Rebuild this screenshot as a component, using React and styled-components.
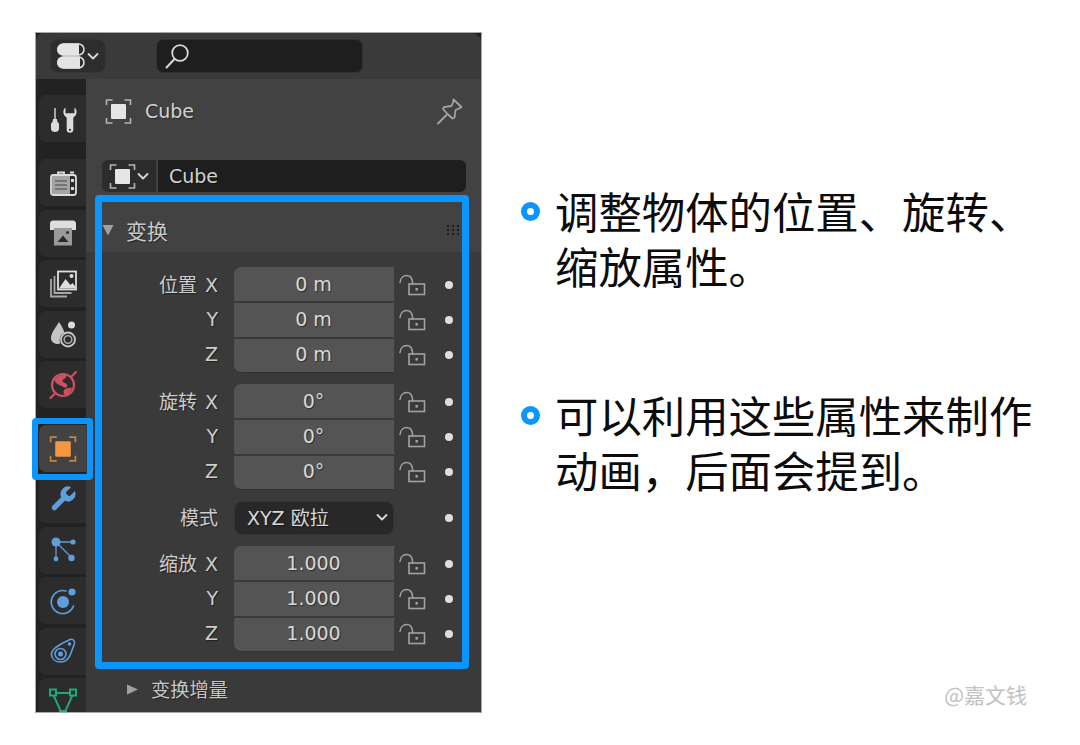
import React from "react";
import styled, { createGlobalStyle } from "styled-components";

const UI_FONT = `"DejaVu Sans", "Noto Sans CJK SC", sans-serif`;

const GlobalStyle = createGlobalStyle`
  html, body {
    margin: 0;
    background: #fff;
  }
`;

const Page = styled.div`
  display: flex;
  gap: 40px;
  width: 1080px;
  height: 745px;
  padding: 33px 0 0 36px;
  box-sizing: border-box;
  overflow: hidden;
`;

const Frame = styled.div`
  position: relative;
  width: 445px;
  height: 679px;
  flex: none;
`;

const Editor = styled.div`
  display: flex;
  flex-direction: column;
  height: 100%;
  overflow: hidden;
  background: #202020;
  box-shadow: 0 0 0 1px #a8a8a8;
  font-family: ${UI_FONT};
  color: #d2d2d2;
  text-shadow: 1px 1px 1px rgba(0, 0, 0, 0.45);
`;

const Header = styled.div`
  display: flex;
  align-items: center;
  gap: 50px;
  flex: none;
  height: 46px;
  padding-left: 14px;
  background: #3a3a3a;
  border-radius: 7px 9px 0 0;
`;

const ModeSwitch = styled.div`
  display: flex;
  align-items: center;
  justify-content: center;
  gap: 1px;
  width: 56px;
  height: 34px;
  box-sizing: border-box;
  background: #2d2d2d;
  border: 1px solid #353535;
  border-radius: 8px;
`;

const SearchBox = styled.div`
  display: flex;
  align-items: center;
  width: 207px;
  height: 34px;
  padding-left: 5px;
  box-sizing: border-box;
  background: #1e1e1e;
  border: 1px solid #333;
  border-radius: 7px;
`;

const Body = styled.div`
  display: flex;
  flex: 1;
  min-height: 0;
`;

const Sidebar = styled.div`
  display: flex;
  flex-direction: column;
  flex: none;
  width: 50px;
  padding: 16px 0 0 3px;
  box-sizing: border-box;
  background: #222;
`;

const TabGroup = styled.div`
  display: flex;
  flex-direction: column;
  gap: 3.6px;
  margin-bottom: 17px;
`;

const Tab = styled.div`
  display: flex;
  align-items: center;
  justify-content: center;
  flex: none;
  height: 47px;
  border-radius: 7px 0 0 7px;
  background: ${(p) => (p.$active ? "#424242" : "#2c2c2c")};
`;

const Main = styled.div`
  display: flex;
  flex-direction: column;
  flex: 1;
  min-width: 0;
  background: #424242;
`;

const TitleRow = styled.div`
  display: flex;
  align-items: center;
  gap: 13px;
  height: 64px;
  padding: 0 17px 0 19px;
  font-size: 19px;
`;

const TitleText = styled.span`
  flex: 1;
`;

const NameRow = styled.div`
  display: flex;
  gap: 2px;
  height: 32px;
  margin: 17px 15px 0 16px;
`;

const NameType = styled.div`
  display: flex;
  align-items: center;
  justify-content: center;
  flex: none;
  width: 54px;
  background: #2c2c2c;
  border-radius: 6px 0 0 6px;
`;

const NameInput = styled.div`
  display: flex;
  align-items: center;
  flex: 1;
  padding-left: 11px;
  font-size: 19px;
  background: #1e1e1e;
  border-radius: 0 6px 6px 0;
`;

const PanelHead = styled.div`
  display: flex;
  align-items: center;
  flex: none;
  height: 55px;
  margin-top: 5px;
  padding: 10px 20px 0 16px;
  box-sizing: border-box;
  font-size: 21px;
  color: #c8c8c8;
`;

const PanelTitle = styled.span`
  flex: 1;
  margin-left: 12px;
`;

const PanelBody = styled.div`
  display: flex;
  flex-direction: column;
  flex: 1;
  gap: 11px;
  padding-top: 15px;
  background: #3a3a3a;
`;

const FieldGroup = styled.div`
  display: flex;
  flex-direction: column;
`;

const Row = styled.div`
  display: grid;
  grid-template-columns: 132px 176px 44px 15px;
  align-items: center;
  height: ${(p) => (p.$mode ? "34px" : "35.33px")};
`;

const RowLabel = styled.div`
  padding-bottom: 2px;
  text-align: right;
  font-size: 19px;
  word-spacing: 2px;
  white-space: nowrap;
  color: #cdcdcd;
`;

const Value = styled.div`
  display: flex;
  align-items: center;
  justify-content: center;
  height: 100%;
  margin-left: 16px;
  padding: 0 1px 2px 0;
  box-sizing: border-box;
  font-size: 19px;
  color: #d8d8d8;
  background: #545454;
  border-top: 1px solid ${(p) => (p.$first ? "#545454" : "#3a3a3a")};
  border-bottom: 1px solid ${(p) => (p.$last ? "#333" : "#3a3a3a")};
  border-radius: ${(p) =>
    p.$first ? "7px 0 0 0" : p.$last ? "0 0 0 7px" : "0"};
`;

const ModeSelect = styled.div`
  display: flex;
  align-items: center;
  justify-content: space-between;
  height: 100%;
  margin-left: 16px;
  padding: 0 4px 2px 12px;
  box-sizing: border-box;
  font-size: 19px;
  color: #d8d8d8;
  background: #282828;
  border: 1px solid #333;
  border-radius: 8px;
`;

const LockCell = styled.div`
  display: flex;
  align-items: center;
  margin-left: 5px;
`;

const Dot = styled.span`
  width: 8px;
  height: 8px;
  margin-left: 7px;
  border-radius: 50%;
  background: #dedede;
`;

const SubPanel = styled.div`
  display: flex;
  align-items: center;
  gap: 13px;
  flex: none;
  height: 43px;
  padding: 0 0 3px 41px;
  box-sizing: border-box;
  font-size: 19.3px;
  color: #c6c6c6;
  background: #3a3a3a;
`;

const Highlight = styled.div`
  position: absolute;
  left: ${(p) => p.$left}px;
  top: ${(p) => p.$top}px;
  width: ${(p) => p.$w}px;
  height: ${(p) => p.$h}px;
  box-sizing: border-box;
  border: ${(p) => p.$line}px solid #0a95ff;
  border-radius: 4px;
  pointer-events: none;
`;

const Notes = styled.div`
  display: flex;
  flex-direction: column;
  width: 520px;
  height: 679px;
  padding-top: 150px;
  box-sizing: border-box;
  font-family: "Noto Sans CJK SC", sans-serif;
  color: #0c0c0c;
`;

const Note = styled.div`
  display: flex;
  gap: 15px;
  margin-bottom: 95px;
  font-size: 43.4px;
  line-height: 54.5px;
`;

const NoteDot = styled.span`
  flex: none;
  width: 19px;
  height: 19px;
  margin-top: 19px;
  box-sizing: border-box;
  border: 6.5px solid #0a95ff;
  border-radius: 50%;
  background: #fff;
`;

const Watermark = styled.div`
  align-self: flex-end;
  margin: auto 14px 1px 0;
  font-size: 21px;
  line-height: 34px;
  color: #c2c2c2;
`;

// icons
const Svg = ({ size = 30, children }) => (
  <svg width={size} height={size} viewBox="0 0 30 30" fill="none">
    {children}
  </svg>
);

const Chevron = ({ color = "#d8d8d8" }) => (
  <svg width="14" height="14" viewBox="0 0 14 14" fill="none">
    <path d="M2.5 5 7 9.5 11.5 5" stroke={color} strokeWidth="1.8" strokeLinecap="round" strokeLinejoin="round" />
  </svg>
);

const SwitchIcon = () => (
  <svg width="28" height="26" viewBox="0 0 28 26" fill="none">
    <rect x="1" y="1" width="26" height="11" rx="5.5" stroke="#e4e4e4" strokeWidth="1.5" />
    <path d="M6 .5h16v12H6A6 6 0 0 1 6 .5z" fill="#e4e4e4" />
    <rect x="1" y="14" width="26" height="11" rx="5.5" stroke="#e4e4e4" strokeWidth="1.5" />
    <path d="M6 13.5h17v12H6a6 6 0 0 1 0-12z" fill="#e4e4e4" />
  </svg>
);

const SearchIcon = () => (
  <svg width="30" height="30" viewBox="0 0 30 30" fill="none">
    <circle cx="18" cy="12" r="7.8" stroke="#d8d8d8" strokeWidth="1.8" />
    <path d="M12.5 18 4.500 26.500" stroke="#d8d8d8" strokeWidth="2" strokeLinecap="round" />
  </svg>
);

const ObjectIcon = ({ size = 27, color = "#e6e6e6", frame = "#b4b4b4" }) => (
  <svg width={size} height={size} viewBox="0 0 27 27" fill="none">
    <path
      d="M1.500 7V2h6M19.500 2h6v5M25.500 20v5h-6M7.500 25h-6v-5"
      stroke={frame}
      strokeWidth="1.6"
    />
    <rect x="6" y="6" width="15" height="15" rx="1" fill={color} />
  </svg>
);

const PinIcon = () => (
  <svg width="28" height="28" viewBox="0 0 28 28" fill="none">
    <path
      d="M2 26.500 10.500 18M17.500 2.500l8 7.500-2.500 1.500-3.500 1.500-1 7.500-2 1-5-4.500-4.500-5 .8-1.800 7.700-1.200 1.500-3.500z"
      stroke="#a4a4a4"
      strokeWidth="1.8"
      strokeLinejoin="round"
      strokeLinecap="round"
    />
  </svg>
);

const LockIcon = () => (
  <svg width="27" height="22" viewBox="0 0 27 22" fill="none" style={{ flex: "none" }}>
    <path d="M1 8.500C1.500 4 4.500 1.500 7.500 1.500s5.500 2.200 6 6.500v2" stroke="#a2a2a2" strokeWidth="1.5" strokeLinecap="round" />
    <rect x="10" y="10" width="15.5" height="10.500" stroke="#a2a2a2" strokeWidth="1.6" />
    <rect x="16.500" y="14" width="2.400" height="2.600" fill="#a2a2a2" />
  </svg>
);

const TriangleDown = () => (
  <svg width="12" height="12" viewBox="0 0 12 12">
    <path d="M.5 1h11L6 11.500z" fill="#a0a0a0" />
  </svg>
);

const TriangleRight = () => (
  <svg width="11" height="11" viewBox="0 0 11 11">
    <path d="M0 .5 11 5.500 0 10.500z" fill="#a0a0a0" />
  </svg>
);

const Grip = () => (
  <svg width="15" height="10" viewBox="0 0 15 10" fill="#1c1c1c">
    {[1, 5, 9].map((y) =>
      [1, 6, 11].map((x) => <rect key={`${x}-${y}`} x={x} y={y - 1} width="2" height="2" />)
    )}
  </svg>
);

const ToolIcon = () => (
  <Svg>
    <path d="M7 4v11" stroke="#dcdcdc" strokeWidth="1.4" />
    <path d="M5 15h4l.5 3 1.500 1.500V25c0 2-2 3-4 3s-4-1-4-3v-5.500L4.500 18z" fill="#dcdcdc" />
    <path
      d="M17.500 3.500c-3 2-3 7.500 1.200 10V26c0 1.500 1.400 2.800 3.300 2.800s3.300-1.300 3.300-2.800V13.500c4.200-2.500 4.200-8 1.200-10v5.800h-9z"
      fill="#dcdcdc"
    />
    <circle cx="22" cy="25.800" r="1.100" fill="#2c2c2c" />
  </Svg>
);

const RenderIcon = () => (
  <Svg>
    <path d="M10 7V4.500h6V7M22 4.500h4" stroke="#dcdcdc" strokeWidth="1.800" />
    <rect x="3" y="7" width="25" height="20" rx="2.500" stroke="#dcdcdc" strokeWidth="1.800" />
    <rect x="4" y="8" width="18" height="18" fill="#a4a4a4" />
    <path d="M7 13h12M7 17h12M7 21h12" stroke="#666" strokeWidth="1.500" />
    <rect x="23" y="11" width="3" height="3" fill="#dcdcdc" />
    <rect x="23" y="19" width="3" height="3" fill="#dcdcdc" />
  </Svg>
);

const OutputIcon = () => (
  <Svg>
    <path d="M2 5.500C2 3.500 3.500 2.500 5 2.500h20c1.500 0 3 1 3 3V12H2z" fill="#dedede" />
    <rect x="6" y="10" width="18" height="17.500" fill="#9a9a9a" />
    <path d="M9.500 24 15 17.500l5.500 6.500z" fill="#2b2b2b" />
    <circle cx="19.500" cy="14.500" r="1.500" fill="#2b2b2b" />
  </Svg>
);

const ViewLayerIcon = () => (
  <Svg>
    <path d="M3 10v17.500h16M6.500 7v17h17" stroke="#a8a8a8" strokeWidth="1.800" />
    <rect x="10" y="2.500" width="18" height="18" fill="#2c2c2c" stroke="#dedede" strokeWidth="1.800" />
    <path d="M11 19.500 17.500 10l5 6 2-2 2.500 3v2.500z" fill="#dedede" />
    <circle cx="23.500" cy="7" r="2" fill="#dedede" />
  </Svg>
);

const SceneIcon = () => (
  <Svg>
    <path d="M11 3C8 8 3 14 3 19c0 3.500 3 6 6.500 6 1 0 2-.3 3-.7-2-4.300 0-9 4-10.800C15 9 13 6 11 3z" fill="#c4c4c4" />
    <circle cx="23.500" cy="6" r="3.500" fill="#dcdcdc" />
    <circle cx="20" cy="20.500" r="7" stroke="#c8c8c8" strokeWidth="1.800" />
    <circle cx="20" cy="20.500" r="3.800" stroke="#a8a8a8" strokeWidth="1.600" />
  </Svg>
);

const WorldIcon = () => (
  <Svg>
    <circle cx="15" cy="15" r="11" stroke="#c9535f" strokeWidth="2.200" />
    <path d="M7 9c3-4 9-5 11-4 1 2-1 4-3 4.500-1 1 0 3 2 3.500s3 2.500 2 4-3 .5-4.500-.5S11 15 9.500 14 6 11 7 9zM16 20c2-1.500 6-2.500 8-2-1 3.500-4 6.500-7 7-1.500-1-2-3.500-1-5z" fill="#c9535f" />
    <path d="M2.500 28 6.500 24M23.500 6.500 28 2" stroke="#c9535f" strokeWidth="2.200" strokeLinecap="round" />
  </Svg>
);

const ModifierIcon = () => (
  <svg width="30" height="30" viewBox="0 0 24 24">
    <path
      d="M14.700 6.300a1 1 0 0 0 0 1.400l1.600 1.600a1 1 0 0 0 1.400 0l3.770-3.770a6 6 0 0 1-7.940 7.940l-6.910 6.910a2.120 2.120 0 0 1-3-3l6.910-6.910a6 6 0 0 1 7.940-7.940l-3.760 3.760z"
      fill="#5f9ddb"
    />
  </svg>
);

const ParticlesIcon = () => (
  <Svg>
    <path d="M8 7h17M8 7v17M8 7l15 15" stroke="#5f9ddb" strokeWidth="1.300" />
    <circle cx="8" cy="7" r="4.500" fill="#5f9ddb" />
    <circle cx="25" cy="7" r="2.600" fill="#5f9ddb" />
    <circle cx="8" cy="24" r="2.400" fill="#5f9ddb" />
    <circle cx="23.500" cy="23" r="3.200" fill="#5f9ddb" />
  </Svg>
);

const PhysicsIcon = () => (
  <Svg>
    <path d="M18 5A11.500 11.500 0 1 0 25.500 20" stroke="#5f9ddb" strokeWidth="1.600" strokeLinecap="round" />
    <circle cx="15" cy="16" r="6" fill="#5f9ddb" />
    <circle cx="24" cy="6" r="3.600" fill="#5f9ddb" />
  </Svg>
);

const ConstraintIcon = () => (
  <Svg>
    <path d="M3.500 19C3 14 8 11 13 8l9-4.500c2.500-1 5 1 4.500 4L23 17c-1.500 5-5 9-10.500 9C7.500 26 4 23 3.500 19z" stroke="#5f9ddb" strokeWidth="1.600" />
    <circle cx="12.500" cy="18" r="5.500" stroke="#5f9ddb" strokeWidth="1.600" />
    <circle cx="12.500" cy="18" r="2.500" fill="#5f9ddb" />
    <circle cx="21.500" cy="8" r="1.800" fill="#5f9ddb" />
  </Svg>
);

const DataIcon = () => (
  <Svg>
    <path d="M6 6h18M5 7l9 20M25 7l-9 20" stroke="#1fa87b" strokeWidth="2" />
    <rect x="2" y="2.500" width="6" height="6" fill="#2c2c2c" stroke="#1fa87b" strokeWidth="2" />
    <rect x="22" y="2.500" width="6" height="6" fill="#2c2c2c" stroke="#1fa87b" strokeWidth="2" />
    <rect x="12" y="24" width="6" height="6" fill="#2c2c2c" stroke="#1fa87b" strokeWidth="2" />
  </Svg>
);

const FieldRows = ({ name, value }) => (
  <FieldGroup>
    {["X", "Y", "Z"].map((axis, i) => (
      <Row key={axis}>
        <RowLabel>{i === 0 ? `${name} ${axis}` : axis}</RowLabel>
        <Value $first={i === 0} $last={i === 2}>
          {value}
        </Value>
        <LockCell>
          <LockIcon />
        </LockCell>
        <Dot />
      </Row>
    ))}
  </FieldGroup>
);

const App = () => {
  return (
    <React.Fragment>
      <GlobalStyle />
      <Page>
        <Frame>
          <Editor>
            <Header>
              <ModeSwitch>
                <SwitchIcon />
                <Chevron />
              </ModeSwitch>
              <SearchBox>
                <SearchIcon />
              </SearchBox>
            </Header>
            <Body>
              <Sidebar>
                <TabGroup>
                  <Tab><ToolIcon /></Tab>
                </TabGroup>
                <TabGroup>
                  <Tab><RenderIcon /></Tab>
                  <Tab><OutputIcon /></Tab>
                  <Tab><ViewLayerIcon /></Tab>
                  <Tab><SceneIcon /></Tab>
                  <Tab><WorldIcon /></Tab>
                </TabGroup>
                <TabGroup>
                  <Tab $active>
                    <ObjectIcon size={28} color="#f5973f" frame="#c8853f" />
                  </Tab>
                  <Tab><ModifierIcon /></Tab>
                  <Tab><ParticlesIcon /></Tab>
                  <Tab><PhysicsIcon /></Tab>
                  <Tab><ConstraintIcon /></Tab>
                  <Tab><DataIcon /></Tab>
                </TabGroup>
              </Sidebar>
              <Main>
                <TitleRow>
                  <ObjectIcon />
                  <TitleText>Cube</TitleText>
                  <PinIcon />
                </TitleRow>
                <NameRow>
                  <NameType>
                    <ObjectIcon />
                    <Chevron />
                  </NameType>
                  <NameInput>Cube</NameInput>
                </NameRow>
                <PanelHead>
                  <TriangleDown />
                  <PanelTitle>变换</PanelTitle>
                  <Grip />
                </PanelHead>
                <PanelBody>
                  <FieldRows name="位置" value="0 m" />
                  <FieldRows name="旋转" value="0°" />
                  <Row $mode>
                    <RowLabel>模式</RowLabel>
                    <ModeSelect>
                      XYZ 欧拉
                      <Chevron />
                    </ModeSelect>
                    <span />
                    <Dot />
                  </Row>
                  <FieldRows name="缩放" value="1.000" />
                </PanelBody>
                <SubPanel>
                  <TriangleRight />
                  变换增量
                </SubPanel>
              </Main>
            </Body>
          </Editor>
          <Highlight $left={59} $top={162} $w={374} $h={474} $line={7} />
          <Highlight $left={-4} $top={385} $w={61} $h={62} $line={6} />
        </Frame>
        <Notes>
          <Note>
            <NoteDot />
            <div>调整物体的位置、旋转、缩放属性。</div>
          </Note>
          <Note>
            <NoteDot />
            <div>可以利用这些属性来制作动画，后面会提到。</div>
          </Note>
          <Watermark>@嘉文钱</Watermark>
        </Notes>
      </Page>
    </React.Fragment>
  );
};

export default App;
